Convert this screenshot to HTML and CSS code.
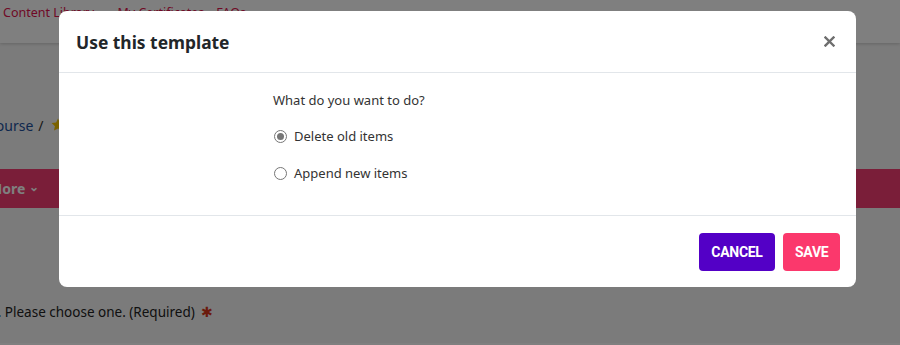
FILE: index.html
```html
<!DOCTYPE html>
<html lang="en">
<head>
<meta charset="utf-8">
<title>Use this template</title>
<link rel="stylesheet" href="styles.css">
</head>
<body>
<div class="page">
  <header class="topbar">
    <nav class="topnav">
      <span class="topnav-item">Content Library <span class="nav-chev">⌄</span></span>
      <span class="topnav-item">My Certificates</span>
      <span class="topnav-item">FAQs</span>
    </nav>
  </header>
  <div class="crumbs">
    <span class="crumb-link">Course</span>
    <span class="crumb-sep">/</span>
    <svg class="crumb-star" width="14" height="14" viewBox="0 0 14 14"><path d="M7 0.5l1.9 4.1 4.5.5-3.3 3.1.9 4.4L7 10.4 3 12.6l.9-4.4L.6 5.1l4.5-.5z" fill="#f5c400"/></svg>
  </div>
  <div class="pinkbar">
    <span class="pinkbar-item">More <span class="chev">⌄</span></span>
  </div>
  <p class="question">1. Please choose one. (Required) <span class="req">✱</span></p>
</div>

<div class="overlay"></div>

<div class="modal" role="dialog">
  <div class="modal-header">
    <h2 class="modal-title">Use this template</h2>
    <button class="modal-close" aria-label="Close">
      <svg width="11" height="11" viewBox="0 0 11 11"><path d="M1.5 1.5l8 8M9.5 1.5l-8 8" stroke="#6e6e6e" stroke-width="2.4" stroke-linecap="square"/></svg>
    </button>
  </div>
  <div class="modal-body">
    <div class="spacer"></div>
    <div class="form">
      <p class="form-label">What do you want to do?</p>
      <label class="radio"><span class="radio-dot checked"></span>Delete old items</label>
      <label class="radio"><span class="radio-dot"></span>Append new items</label>
    </div>
  </div>
  <div class="modal-footer">
    <button class="btn btn-cancel">CANCEL</button>
    <button class="btn btn-save">SAVE</button>
  </div>
</div>
</body>
</html>
```

FILE: styles.css
```css
* { box-sizing: border-box; }
html, body { margin: 0; padding: 0; }
body {
  width: 900px;
  height: 345px;
  overflow: hidden;
  font-family: "Noto Sans", "Open Sans", sans-serif;
  background: #f6f6f6;
  position: relative;
}
.page {
  display: flex;
  flex-direction: column;
  height: 345px;
  border-bottom: 2px solid #fff;
}
.topbar {
  height: 43px;
  background: #ffffff;
  box-shadow: 0 1px 3px rgba(0,0,0,0.18);
  display: flex;
  align-items: flex-start;
}
.topnav {
  display: flex;
  gap: 12px;
  padding: 3px 0 0 0;
  margin-left: 3px;
}
.topnav-item {
  color: #e0124c;
  font-size: 12.5px;
  line-height: 20px;
}
.nav-chev { font-size: 10px; }
.crumbs {
  margin-top: 72px;
  display: flex;
  align-items: center;
  gap: 5px;
  margin-left: -13px;
  height: 20px;
}
.crumb-link { color: #1c4f9c; font-size: 14px; }
.crumb-sep { color: #333; font-size: 14px; }
.crumb-star { margin-left: 2px; }
.pinkbar {
  margin-top: 34px;
  height: 39px;
  background: #f43c72;
  display: flex;
  align-items: center;
}
.pinkbar-item {
  color: #ffffff;
  font-weight: 700;
  font-size: 14px;
  margin-left: -11px;
}
.chev { font-size: 12px; font-weight: 700; position: relative; top: -3px; }
.question {
  margin: 94px 0 0 -10px;
  font-size: 13.5px;
  color: #222;
}
.req { color: #d63418; font-size: 14px; margin-left: 3px; }

.overlay {
  position: absolute;
  inset: 0;
  background: rgba(0,0,0,0.5);
}

.modal {
  position: absolute;
  left: 59px;
  top: 11px;
  width: 797px;
  height: 276px;
  background: #fff;
  border-radius: 8px;
  display: flex;
  flex-direction: column;
  overflow: hidden;
}
.modal-header {
  height: 62px;
  padding: 0 19px 0 17px;
  display: flex;
  align-items: center;
  justify-content: space-between;
  border-bottom: 1px solid #e2e6ea;
}
.modal-title {
  margin: 0;
  font-size: 17.4px;
  font-weight: 700;
  color: #222629;
  padding-top: 1px;
}
.modal-close {
  border: 0;
  background: none;
  padding: 0;
  width: 16px;
  height: 16px;
  display: flex;
  align-items: center;
  justify-content: center;
}
.modal-body {
  height: 143px;
  display: grid;
  grid-template-columns: 214px 1fr;
  border-bottom: 1px solid #e2e6ea;
}
.form { padding-top: 18px; }
.form-label {
  margin: 0 0 18px 0;
  font-size: 13px;
  line-height: 18px;
  color: #333;
}
.radio {
  display: flex;
  align-items: center;
  gap: 7px;
  font-size: 13px;
  line-height: 18px;
  color: #333;
  margin-bottom: 19px;
  margin-left: 1px;
}
.radio-dot {
  width: 13px;
  height: 13px;
  border-radius: 50%;
  border: 1px solid #767676;
  background: #fff;
  position: relative;
}
.radio-dot.checked::after {
  content: "";
  position: absolute;
  left: 2px;
  top: 2px;
  width: 7px;
  height: 7px;
  border-radius: 50%;
  background: #767676;
}
.modal-footer {
  flex: 1;
  display: flex;
  justify-content: flex-end;
  align-items: center;
  gap: 8px;
  padding: 0 16px 0 0;
}
.btn {
  border: 0;
  height: 38px;
  border-radius: 4px;
  color: #fff;
  font-family: "Roboto", "Noto Sans", sans-serif;
  font-weight: 700;
  font-size: 14px;
  letter-spacing: -0.3px;
  padding: 0 12px;
}
.btn-cancel { background: #5300c6; width: 76px; }
.btn-save { background: #fb386c; width: 57px; }
```
